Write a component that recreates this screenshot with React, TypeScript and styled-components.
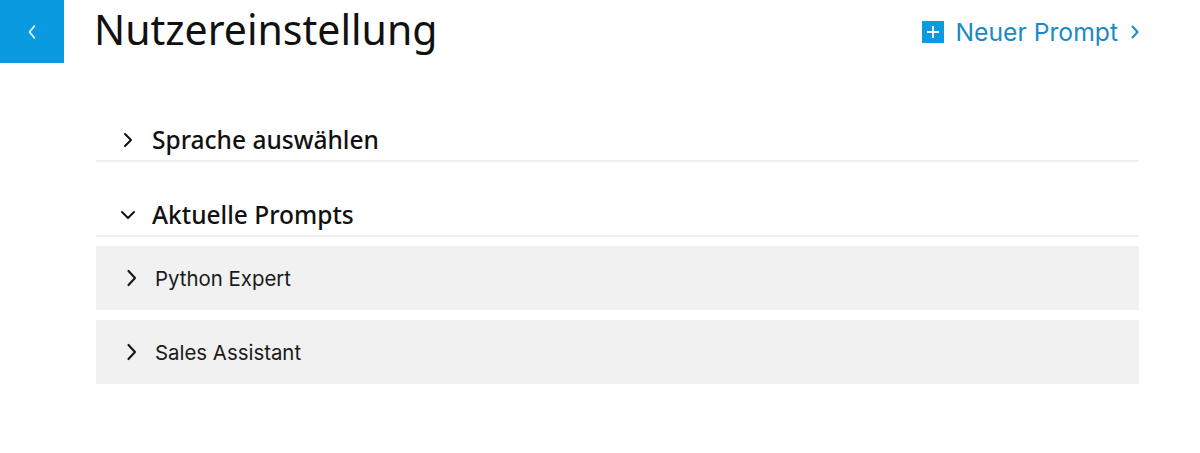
import React from "react";
import styled, { createGlobalStyle } from "styled-components";

const GlobalStyle = createGlobalStyle`
  html, body { margin: 0; padding: 0; background: #ffffff; }
  body { font-family: "Noto Sans", "Open Sans", sans-serif; color: #111; }
  * { box-sizing: border-box; }
`;

const Page = styled.div`
  width: 1200px;
  height: 453px;
  display: flex;
  flex-direction: column;
`;

const Header = styled.header`
  display: flex;
  align-items: center;
  height: 63px;
`;

const BackButton = styled.button`
  width: 64px;
  height: 63px;
  border: none;
  padding: 0;
  background: #0a9ae0;
  display: flex;
  align-items: center;
  justify-content: center;
  color: #fff;
  cursor: pointer;
`;

const Title = styled.h1`
  margin: 0 0 0 30px;
  font-family: "Noto Sans", sans-serif;
  font-weight: 400;
  font-size: 41px;
  line-height: 1;
  color: #111;
  flex: 1;
  position: relative;
  top: -2px;
`;

const NewPrompt = styled.a`
  display: flex;
  align-items: center;
  margin-right: 60px;
  color: #1a8ac5;
  font-family: "Inter", sans-serif;
  font-size: 24.7px;
  font-weight: 400;
  text-decoration: none;
  cursor: pointer;
`;

const PlusBox = styled.span`
  width: 22px;
  height: 22px;
  margin-right: 12px;
  background: #0a9ae0;
  display: flex;
  align-items: center;
  justify-content: center;
`;

const NewPromptArrow = styled.span`
  display: flex;
  margin-left: 12px;
`;

const Content = styled.main`
  margin: 46px 61px 0 96px;
  display: flex;
  flex-direction: column;
  gap: 22px;
`;

const Section = styled.section`
  display: flex;
  flex-direction: column;
`;

const SectionHeader = styled.div`
  display: flex;
  align-items: center;
  height: 53px;
  padding: 10px 0 0 24px;
  gap: 16px;
  border-bottom: 2px solid #f0f0f0;
  font-family: "Noto Sans", sans-serif;
  font-size: 24.5px;
  font-weight: 500;
  color: #111;
`;

const Items = styled.div`
  display: flex;
  flex-direction: column;
  gap: 10px;
  margin-top: 9px;
`;

const Item = styled.div`
  display: flex;
  align-items: center;
  height: 64px;
  background: #f1f1f1;
  padding-left: 30px;
  gap: 17px;
  font-family: "Inter", sans-serif;
  font-size: 20.4px;
  color: #1a1a1a;
`;

type IconProps = { w: number; h: number; d: string; stroke: number };

const Glyph = ({ w, h, d, stroke }: IconProps) => (
  <svg width={w} height={h} viewBox={`0 0 ${w} ${h}`} fill="none">
    <path d={d} stroke="currentColor" strokeWidth={stroke} strokeLinecap="round" strokeLinejoin="round" />
  </svg>
);

export default function App() {
  return (
    <>
      <GlobalStyle />
      <Page>
        <Header>
          <BackButton aria-label="Zurück">
            <Glyph w={10} h={16} d="M7.5 2 L2.5 8 L7.5 14" stroke={1.6} />
          </BackButton>
          <Title>Nutzereinstellung</Title>
          <NewPrompt>
            <PlusBox>
              <svg width="14" height="14" viewBox="0 0 14 14">
                <path d="M7 1 V13 M1 7 H13" stroke="#fff" strokeWidth="2" />
              </svg>
            </PlusBox>
            Neuer Prompt
            <NewPromptArrow>
              <Glyph w={10} h={16} d="M2.5 2.5 L7.5 8 L2.5 13.5" stroke={2} />
            </NewPromptArrow>
          </NewPrompt>
        </Header>
        <Content>
          <Section>
            <SectionHeader>
              <Glyph w={16} h={16} d="M5 2 L11 8 L5 14" stroke={2} />
              Sprache auswählen
            </SectionHeader>
          </Section>
          <Section>
            <SectionHeader>
              <Glyph w={16} h={16} d="M2 5 L8 11 L14 5" stroke={2} />
              Aktuelle Prompts
            </SectionHeader>
            <Items>
              <Item>
                <Glyph w={12} h={18} d="M2.5 2 L9 9 L2.5 16" stroke={2.2} />
                Python Expert
              </Item>
              <Item>
                <Glyph w={12} h={18} d="M2.5 2 L9 9 L2.5 16" stroke={2.2} />
                Sales Assistant
              </Item>
            </Items>
          </Section>
        </Content>
      </Page>
    </>
  );
}
